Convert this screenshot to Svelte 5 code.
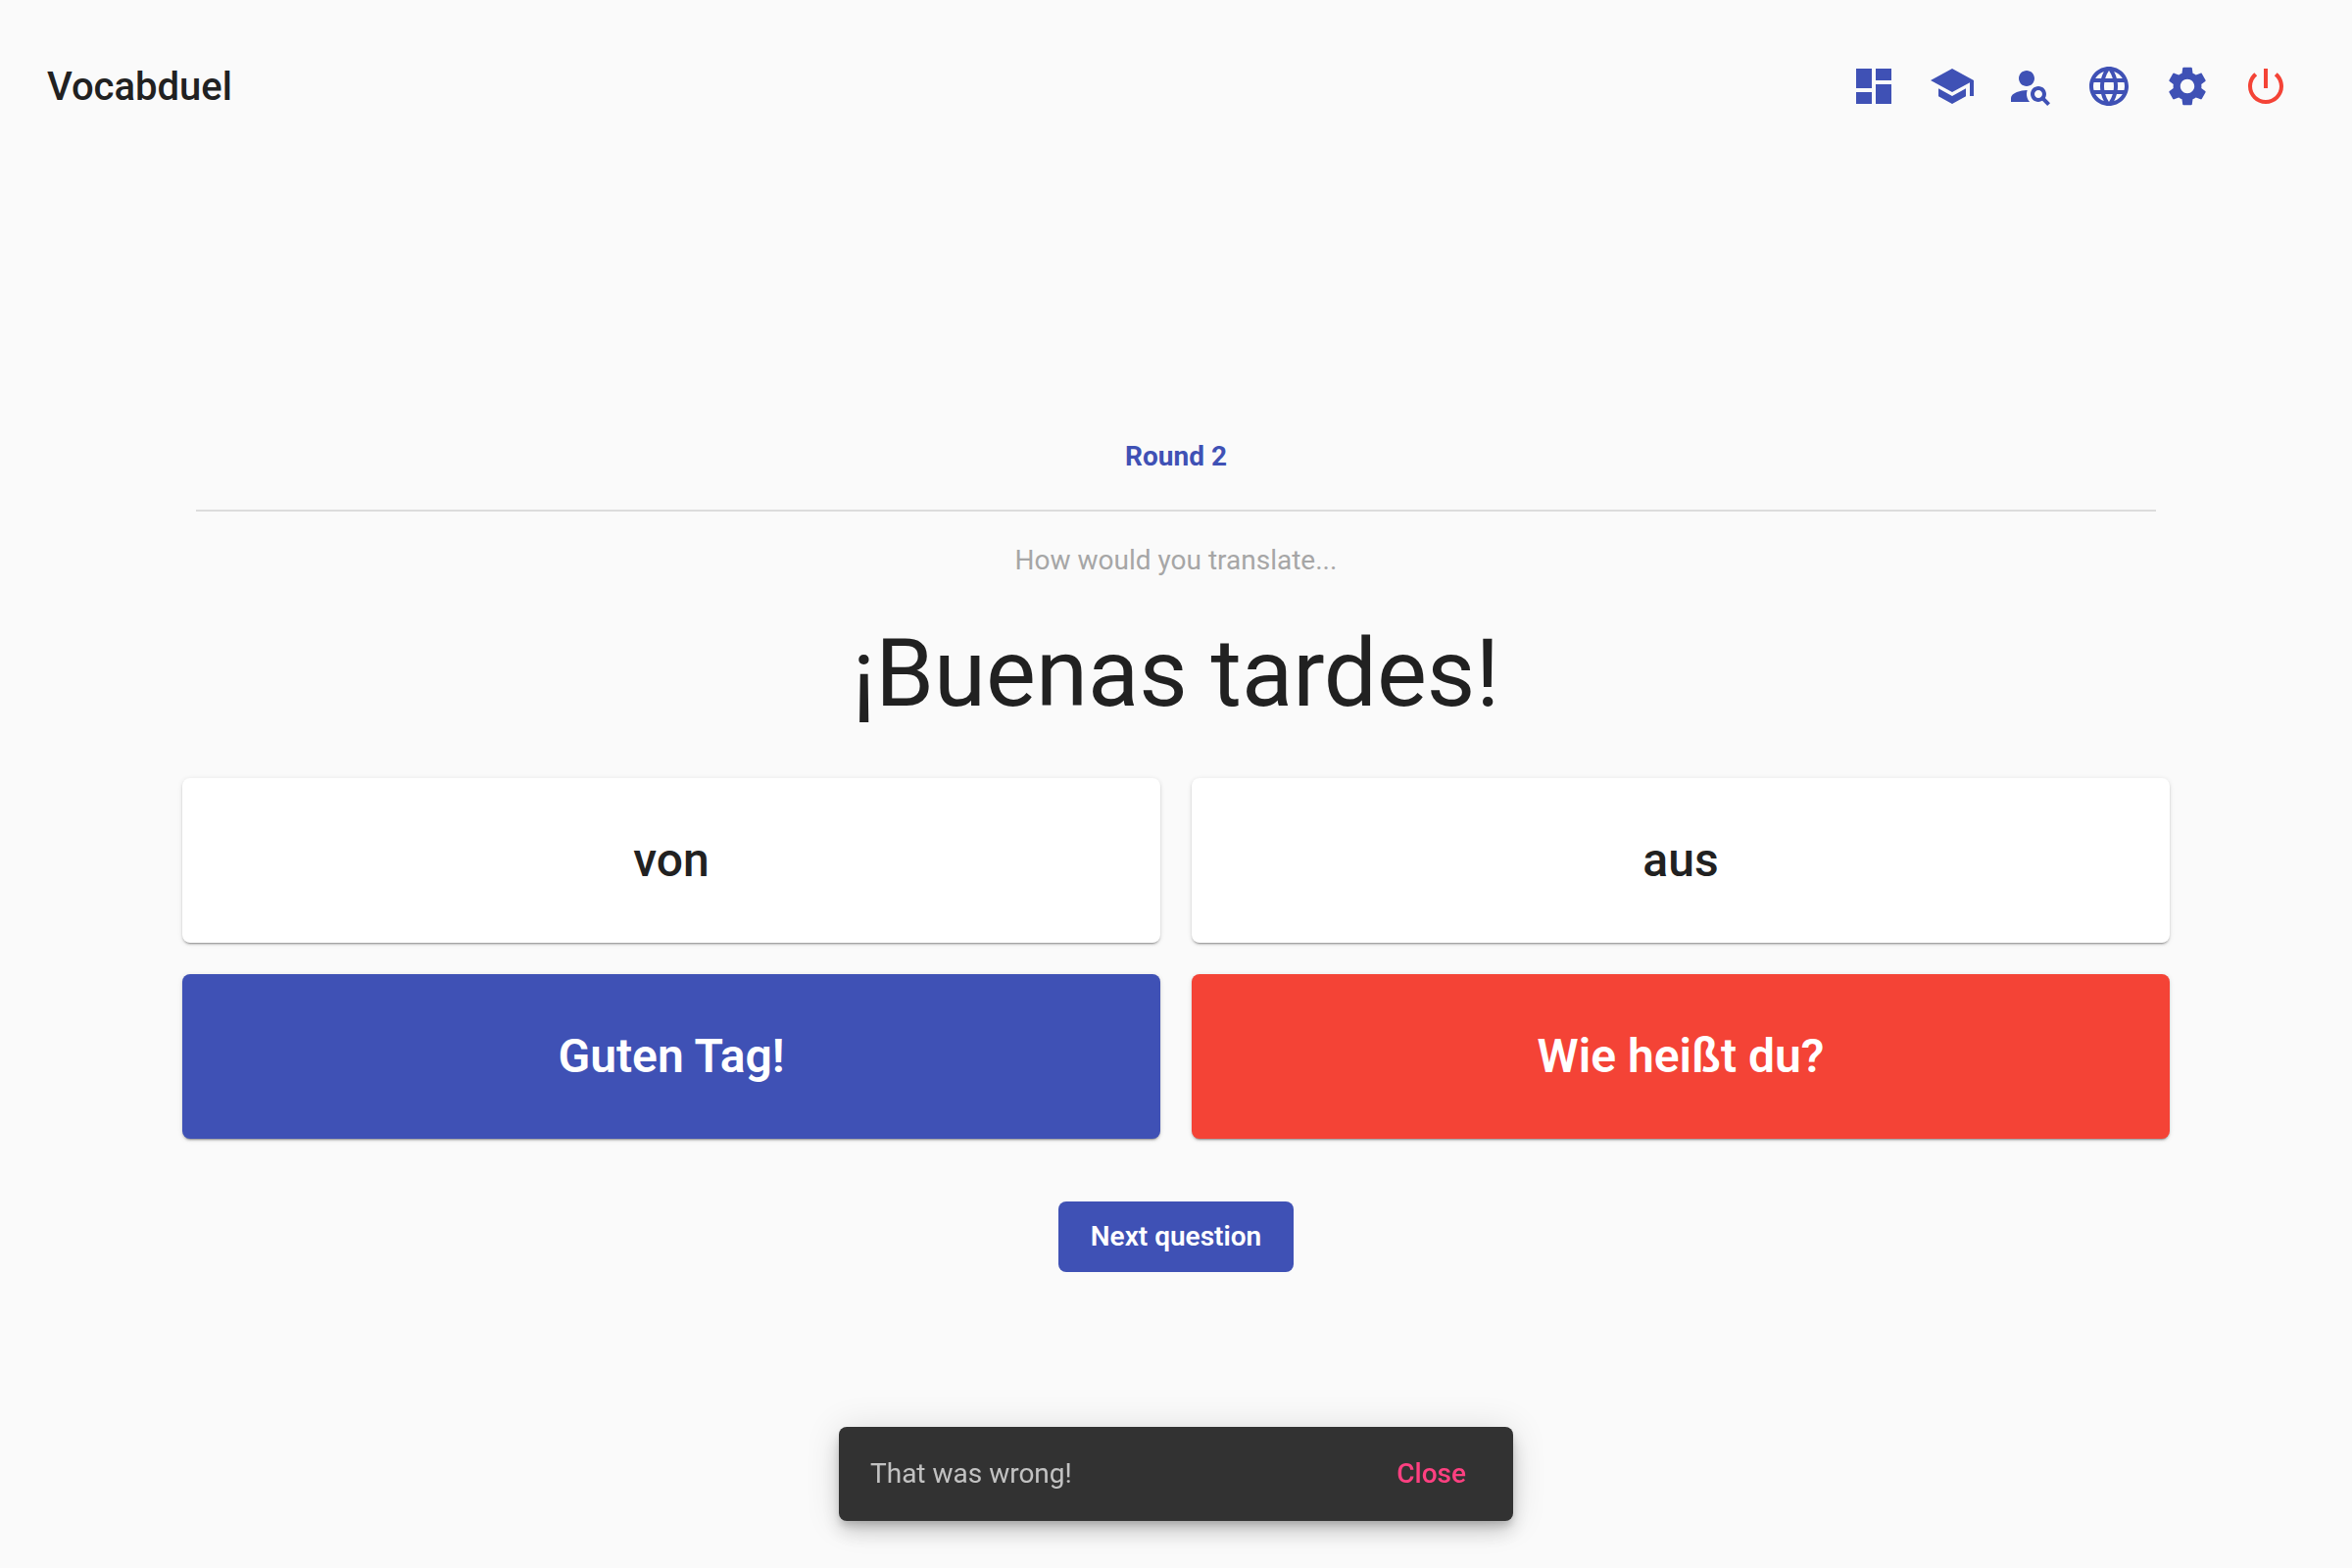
<script>
  const nav = [
    { label: 'Dashboard', d: 'M3 13h8V3H3v10zm0 8h8v-6H3v6zm10 0h8V11h-8v10zm0-18v6h8V3h-8z' },
    { label: 'Vocabulary', d: 'M5 13.18v4L12 21l7-3.820v-4L12 17l-7-3.820zM12 3L1 9l11 6 9-4.910V17h2V9L12 3z' },
    { label: 'Find user', d: 'M10 12c2.210 0 4-1.790 4-4s-1.790-4-4-4-4 1.790-4 4 1.790 4 4 4zM10.350 14.010C7.620 13.910 2 15.270 2 18v2h9.540c-2.470-2.760-1.230-5.890-1.190-5.990zM19.430 18.020c.36-.59.57-1.280.57-2.020 0-2.210-1.790-4-4-4s-4 1.790-4 4 1.790 4 4 4c.74 0 1.430-.22 2.020-.57L20.590 22 22 20.590l-2.570-2.570zM16 18c-1.100 0-2-.9-2-2s.9-2 2-2 2 .9 2 2-.9 2-2 2z' },
    { label: 'Language', d: 'M11.990 2C6.470 2 2 6.480 2 12s4.470 10 9.990 10C17.520 22 22 17.520 22 12S17.520 2 11.990 2zm6.930 6h-2.950c-.32-1.250-.78-2.450-1.380-3.560 1.840.63 3.370 1.910 4.330 3.560zM12 4.040c.83 1.200 1.480 2.530 1.910 3.960h-3.820c.43-1.430 1.080-2.760 1.910-3.960zM4.260 14C4.100 13.360 4 12.690 4 12s.1-1.360.26-2h3.380c-.08.66-.14 1.320-.14 2s.06 1.340.14 2H4.260zm.82 2h2.950c.32 1.250.78 2.450 1.380 3.560-1.840-.63-3.370-1.900-4.330-3.560zm2.950-8H5.080c.96-1.660 2.490-2.930 4.330-3.560C8.810 5.550 8.350 6.750 8.030 8zM12 19.960c-.83-1.200-1.480-2.530-1.910-3.960h3.820c-.43 1.430-1.080 2.760-1.910 3.960zM14.340 14H9.660c-.09-.66-.16-1.320-.16-2s.07-1.350.16-2h4.680c.09.65.16 1.320.16 2s-.07 1.340-.16 2zm.25 5.560c.6-1.110 1.060-2.310 1.380-3.560h2.950c-.96 1.650-2.490 2.930-4.330 3.560zM16.360 14c.08-.66.14-1.320.14-2s-.06-1.340-.14-2h3.380c.16.64.26 1.310.26 2s-.1 1.360-.26 2h-3.380z' },
    { label: 'Settings', d: 'M19.140 12.940c.04-.3.06-.61.06-.94 0-.32-.02-.64-.07-.94l2.030-1.580c.18-.14.23-.41.12-.61l-1.920-3.320c-.12-.22-.37-.29-.59-.22l-2.390.96c-.5-.38-1.030-.7-1.620-.94l-.36-2.540c-.04-.24-.24-.41-.48-.41h-3.840c-.24 0-.43.17-.47.41l-.36 2.540c-.59.24-1.130.57-1.620.94l-2.390-.96c-.22-.08-.47 0-.59.22L2.740 8.870c-.12.21-.08.47.12.61l2.030 1.580c-.05.3-.09.63-.09.94s.02.64.07.94l-2.030 1.580c-.18.14-.23.41-.12.61l1.920 3.320c.12.22.37.29.59.22l2.390-.96c.5.38 1.030.7 1.620.94l.36 2.540c.05.24.24.41.48.41h3.840c.24 0 .44-.17.47-.41l.36-2.540c.59-.24 1.130-.56 1.620-.94l2.390.96c.22.08.47 0 .59-.22l1.920-3.320c.12-.22.07-.47-.12-.61l-2.010-1.580zM12 15.600c-1.980 0-3.600-1.620-3.600-3.600s1.620-3.600 3.600-3.600 3.600 1.620 3.600 3.600-1.620 3.600-3.600 3.600z' },
    { label: 'Log out', warn: true, d: 'M13 3h-2v10h2V3zm4.830 2.170l-1.420 1.420C17.990 7.860 19 9.810 19 12c0 3.870-3.130 7-7 7s-7-3.130-7-7c0-2.190 1.010-4.140 2.580-5.420L6.170 5.170C4.230 6.820 3 9.260 3 12c0 4.970 4.030 9 9 9s9-4.030 9-9c0-2.740-1.230-5.180-3.170-6.830z' }
  ];
  const answers = [
    { text: 'von', state: '' },
    { text: 'aus', state: '' },
    { text: 'Guten Tag!', state: 'correct' },
    { text: 'Wie heißt du?', state: 'wrong' }
  ];
  let open = $state(true);
</script>

<div class="page">
  <header>
    <a class="brand" href="#home">Vocabduel</a>
    <nav>
      {#each nav as item}
        <button class="icon" class:warn={item.warn} aria-label={item.label}>
          <svg viewBox="0 0 24 24" aria-hidden="true"><path d={item.d} /></svg>
        </button>
      {/each}
    </nav>
  </header>

  <main>
    <h2>Round 2</h2>
    <p class="prompt">How would you translate...</p>
    <h1>¡Buenas tardes!</h1>
    <div class="answers">
      {#each answers as a}
        <button class="answer {a.state}">{a.text}</button>
      {/each}
    </div>
    <button class="next">Next question</button>
  </main>

  {#if open}
    <div class="toast-area">
      <div class="snackbar" role="status">
        <span>That was wrong!</span>
        <button class="close" onclick={() => (open = false)}>Close</button>
      </div>
    </div>
  {/if}
</div>

<style>
  :global(body) {
    background: #fafafa;
  }
  .page {
    box-sizing: border-box;
    min-height: 100vh;
    display: flex;
    flex-direction: column;
    font-family: Roboto, sans-serif;
    color: #212121;
  }
  button {
    font-family: inherit;
    border: 0;
    cursor: pointer;
  }
  header {
    display: flex;
    align-items: center;
    justify-content: space-between;
    height: 176px;
    padding: 0 48px;
  }
  .brand {
    color: inherit;
    text-decoration: none;
    font-size: 40px;
    font-weight: 500;
  }
  nav {
    display: flex;
  }
  .icon {
    display: grid;
    place-items: center;
    width: 80px;
    height: 80px;
    padding: 0;
    background: none;
    color: #3f51b5;
  }
  .icon.warn {
    color: #f44336;
  }
  svg {
    width: 48px;
    height: 48px;
    fill: currentColor;
  }
  main {
    flex: 1;
    display: flex;
    flex-direction: column;
    align-items: center;
    justify-content: center;
    padding: 0 186px 30px;
  }
  h2 {
    align-self: stretch;
    margin: 0 14px 32px;
    padding-bottom: 36px;
    border-bottom: 2px solid #dcdcdc;
    color: #3f51b5;
    font-size: 28px;
    line-height: 36px;
    font-weight: 700;
    text-align: center;
  }
  .prompt {
    margin: 0;
    color: #a6a6a6;
    font-size: 28px;
    line-height: 36px;
  }
  h1 {
    margin: 40px 0 50px;
    font-size: 96px;
    line-height: 114px;
    font-weight: 400;
  }
  .answers {
    align-self: stretch;
    display: grid;
    grid-template-columns: 1fr 1fr;
    gap: 32px;
  }
  .answer {
    height: 168px;
    padding: 0 32px 2px;
    border-radius: 8px;
    background: #fff;
    color: #212121;
    font-size: 48px;
    font-weight: 500;
    box-shadow: 0 3px 1px -2px #0003, 0 2px 2px #00000024, 0 1px 5px #0000001f;
  }
  .correct {
    background: #3f51b5;
    color: #fff;
    font-weight: 600;
  }
  .wrong {
    background: #f44336;
    color: #fff;
    font-weight: 600;
  }
  .next {
    min-width: 240px;
    margin-top: 64px;
    padding: 0 32px 2px;
    height: 72px;
    border-radius: 8px;
    background: #3f51b5;
    color: #fff;
    font-size: 28px;
    font-weight: 600;
  }
  .toast-area {
    position: fixed;
    inset: auto 0 48px;
    display: flex;
    justify-content: center;
    pointer-events: none;
  }
  .snackbar {
    box-sizing: border-box;
    display: flex;
    align-items: center;
    justify-content: space-between;
    min-width: 688px;
    height: 96px;
    padding: 0 32px 2px;
    border-radius: 8px;
    background: #323232;
    color: #ffffffb3;
    font-size: 28px;
    box-shadow: 0 6px 10px -2px #0003, 0 12px 20px #00000024, 0 2px 36px #0000001f;
    pointer-events: auto;
  }
  .close {
    padding: 0 16px;
    height: 72px;
    background: none;
    color: #ff4081;
    font-size: 28px;
    font-weight: 500;
  }
</style>
